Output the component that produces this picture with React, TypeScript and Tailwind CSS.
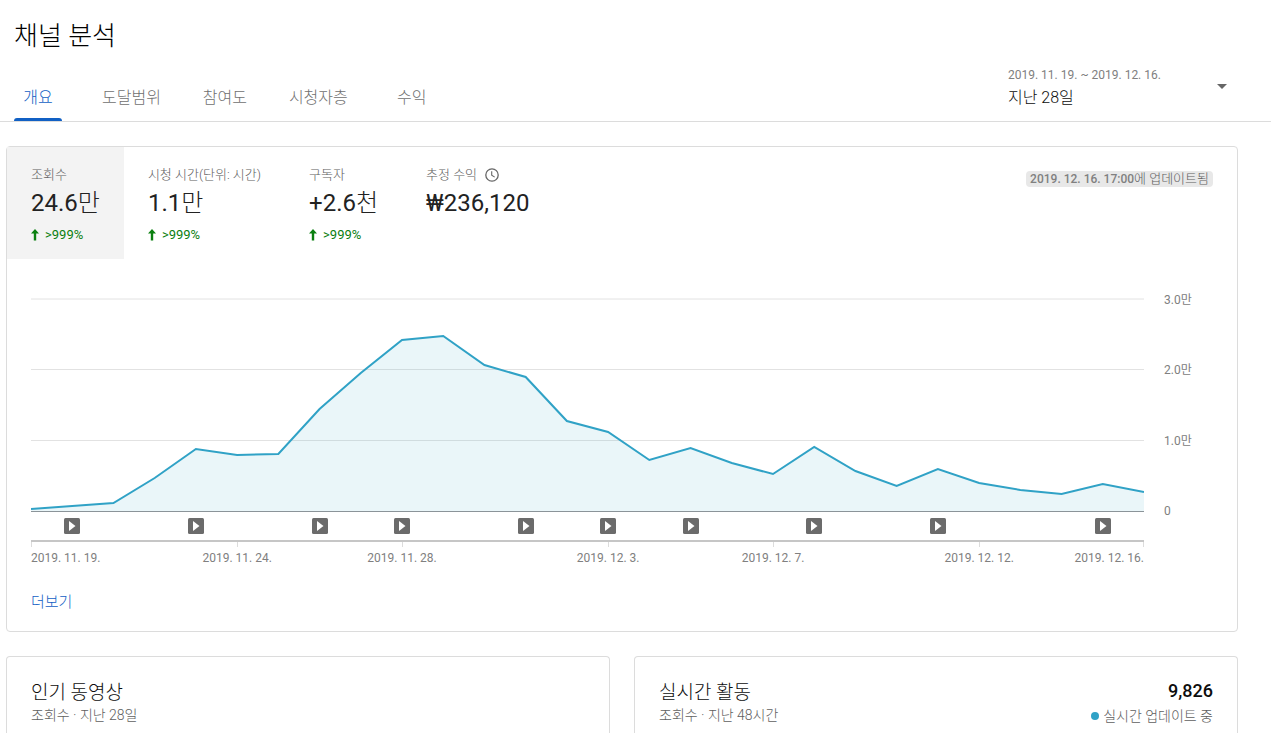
import React from "react";

const TABS = ["개요", "도달범위", "참여도", "시청자층", "수익"];

const METRICS = [
  { label: "조회수", amount: "24.6", unit: "만", change: ">999%", active: true },
  { label: "시청 시간(단위: 시간)", amount: "1.1", unit: "만", change: ">999%" },
  { label: "구독자", amount: "+2.6", unit: "천", change: ">999%" },
  { label: "추정 수익", amount: "₩236,120", unit: "", pending: true },
];

const PLOT_WIDTH = 1113;
const BASELINE = 221;
const HEIGHTS = [
  2, 5, 8, 33, 62, 56, 57, 102, 138, 171, 175, 146, 134, 90, 79, 51, 63, 48,
  37, 64, 40, 25, 42, 28, 21, 17, 27, 19,
];
const STEP = PLOT_WIDTH / (HEIGHTS.length - 1);
const LINE = HEIGHTS.map((h, i) => `${i * STEP},${BASELINE - h}`).join(" ");
const GRID = [
  { y: 9, label: "3.0만" },
  { y: 79.5, label: "2.0만" },
  { y: 150.5, label: "1.0만" },
];
const UPLOADS = [1, 4, 7, 9, 12, 14, 16, 19, 22, 26];
const DATES = [
  { day: 0, label: "2019. 11. 19." },
  { day: 5, label: "2019. 11. 24." },
  { day: 9, label: "2019. 11. 28." },
  { day: 14, label: "2019. 12. 3." },
  { day: 18, label: "2019. 12. 7." },
  { day: 23, label: "2019. 12. 12." },
  { day: 27, label: "2019. 12. 16." },
];

function anchorFor(index: number) {
  if (index === 0) return "start";
  return index === DATES.length - 1 ? "end" : "middle";
}

function ViewsChart() {
  return (
    <svg viewBox="0 0 1182 280" className="block h-auto w-full" role="img" aria-label="조회수">
      {GRID.map((g) => (
        <g key={g.label}>
          <line x1="0" x2={PLOT_WIDTH} y1={g.y} y2={g.y} stroke="#e2e2e2" />
          <text x="1133" y={Math.floor(g.y) + 5} className="fill-[#808080] text-xs">
            {g.label}
          </text>
        </g>
      ))}
      <text x="1133" y="225" className="fill-[#808080] text-xs">
        0
      </text>
      <polygon
        points={`0,${BASELINE} ${LINE} ${PLOT_WIDTH},${BASELINE}`}
        fill="#30a2c6"
        fillOpacity="0.1"
      />
      <line x1="0" x2={PLOT_WIDTH} y1="221.5" y2="221.5" stroke="#8b9499" />
      <svg width={PLOT_WIDTH} height="280">
        <polyline points={LINE} fill="none" stroke="#30a2c6" strokeWidth="2" />
      </svg>
      {UPLOADS.map((day) => (
        <g key={day} transform={`translate(${Math.round(day * STEP) - 8} 228)`}>
          <rect width="16" height="16" rx="1.5" fill="#6b6b6b" />
          <path d="M5 3v10L11.5 8z" fill="#fff" />
        </g>
      ))}
      <line x1="0" x2={PLOT_WIDTH} y1="251" y2="251" stroke="#c6c6c6" strokeWidth="1.8" />
      {DATES.map((d, i) => (
        <g key={d.label}>
          <line
            x1={Math.min(Math.round(d.day * STEP) + 0.5, 1112.5)}
            x2={Math.min(Math.round(d.day * STEP) + 0.5, 1112.5)}
            y1="252"
            y2="257"
            stroke="#dcdcdc"
          />
          <text
            x={d.day * STEP}
            y="272"
            textAnchor={anchorFor(i)}
            className="fill-[#808080] text-xs"
          >
            {d.label}
          </text>
        </g>
      ))}
    </svg>
  );
}

function UpArrow() {
  return (
    <svg viewBox="0 0 8 12" className="h-3 w-2" aria-hidden="true">
      <path d="M4 0 8 4.5H5.2V11.5H2.8V4.5H0z" fill="#0b8010" />
    </svg>
  );
}

function Clock() {
  return (
    <svg viewBox="0 0 14 14" className="h-3.5 w-3.5" fill="none" stroke="#666" aria-hidden="true">
      <circle cx="7" cy="7" r="6.2" strokeWidth="1.3" />
      <path d="M6.7 3.3v4l3 1.8" strokeWidth="1.1" />
    </svg>
  );
}

export default function App() {
  return (
    <div className="flex min-h-screen flex-col bg-white font-['Roboto','Noto_Sans_CJK_KR',sans-serif] text-[#0d0d0d]">
      <header className="flex items-end justify-between border-b border-[#dcdcdc] pl-3.5">
        <div>
          <h1 className="pt-4 text-[26px] leading-10 font-light text-black">채널 분석</h1>
          <nav className="mt-4 flex gap-10">
            {TABS.map((tab, i) => (
              <a
                key={tab}
                href="#"
                aria-current={i === 0 ? "page" : undefined}
                className={
                  i === 0
                    ? "flex h-[49px] min-w-12 flex-col items-center justify-between text-base leading-[51px] text-[#1160c4]"
                    : "flex h-[49px] min-w-12 flex-col items-center text-base leading-[51px] text-[#707070]"
                }
              >
                <span className="h-[46px] font-light">{tab}</span>
                {i === 0 && <span className="h-[3px] w-full rounded-t-sm bg-[#1160c4]" />}
              </a>
            ))}
          </nav>
        </div>
        <button
          type="button"
          className="mr-11 mb-2.5 flex w-[219px] items-center justify-between text-left"
        >
          <span className="flex flex-col pt-1">
            <span className="text-xs leading-5 text-[#808080]">2019. 11. 19. ~ 2019. 12. 16.</span>
            <span className="text-base leading-[26px] font-light">지난 28일</span>
          </span>
          <svg viewBox="0 0 10 5" className="h-[5px] w-2.5" aria-hidden="true">
            <path d="M0 0h10L5 5z" fill="#666" />
          </svg>
        </button>
      </header>

      <main className="flex grow flex-col gap-6 pt-6 pr-[33px] pl-1.5">
        <section className="rounded border border-[#dcdcdc]">
          <div className="flex items-start justify-between">
            <div className="flex">
              {METRICS.map((m) => (
                <button
                  key={m.label}
                  type="button"
                  className={
                    m.active
                      ? "flex h-28 flex-col items-start bg-[#f3f3f3] px-6 pt-[18px]"
                      : "flex h-28 flex-col items-start px-6 pt-[18px]"
                  }
                >
                  <span className="flex items-center gap-2 text-[13px] leading-5 font-light text-[#606060]">
                    {m.label}
                    {m.pending && <Clock />}
                  </span>
                  <span className="text-2xl leading-9 text-[#222]">
                    {m.amount}
                    <span className="font-light">{m.unit}</span>
                  </span>
                  {m.change && (
                    <span className="mt-1 flex items-center gap-1.5 text-[13px] leading-5 text-[#0b8010]">
                      <UpArrow />
                      {m.change}
                    </span>
                  )}
                </button>
              ))}
            </div>
            <p className="mt-6 mr-6 rounded-sm bg-[#e8e8e8] px-1 text-xs leading-4 font-medium text-[#808080]">
              2019. 12. 16. 17:00
              <span className="text-[13px] font-light text-[#606060]">에 업데이트됨</span>
            </p>
          </div>
          <div className="mt-[31px] px-6">
            <ViewsChart />
          </div>
          <div className="px-6 pt-5 pb-[17px]">
            <a href="#" className="block w-fit text-[15px] leading-6 font-light text-[#1160c4]">
              더보기
            </a>
          </div>
        </section>

        <div className="grid grow grid-cols-2 gap-6">
          <section className="rounded-t border border-b-0 border-[#dcdcdc] px-6 pt-[22px]">
            <h2 className="text-[19px] leading-7 font-light">인기 동영상</h2>
            <p className="text-sm leading-4 font-light text-[#606060]">조회수 · 지난 28일</p>
          </section>
          <section className="flex items-start justify-between rounded-t border border-b-0 border-[#dcdcdc] px-6 pt-[22px]">
            <div>
              <h2 className="text-[19px] leading-7 font-light">실시간 활동</h2>
              <p className="text-sm leading-4 font-light text-[#606060]">조회수 · 지난 48시간</p>
            </div>
            <div className="text-right">
              <p className="text-lg leading-6 font-medium">9,826</p>
              <p className="flex items-center gap-1 text-sm leading-[26px] font-light text-[#606060]">
                <span className="h-2 w-2 rounded-full bg-[#30a2c6]" />
                실시간 업데이트 중
              </p>
            </div>
          </section>
        </div>
      </main>
    </div>
  );
}
